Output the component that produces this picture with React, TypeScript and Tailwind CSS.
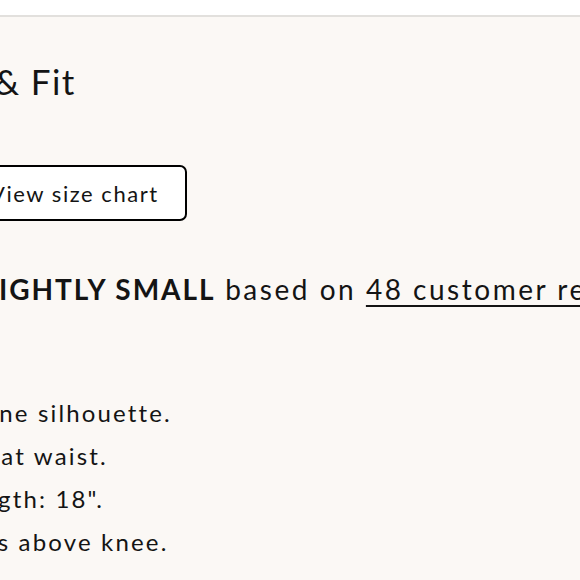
export default function App() {
  const points = [
    "A-line silhouette.",
    "Tie at waist.",
    "Length: 18\".",
    "Falls above knee.",
  ];

  return (
    <div className="w-[580px] h-[580px] overflow-hidden bg-[#fbf8f5] text-[#141414] font-['Lato',sans-serif]">
      <div className="h-[17px] bg-white border-b-2 border-[#e2e0dd]" />
      <div className="flex flex-col items-start">
        <h2 className="mt-[40px] -ml-[83px] text-[35px] leading-[48px] tracking-[0.04em] whitespace-nowrap">
          Size &amp; Fit
        </h2>
        <button
          type="button"
          className="mt-[60px] -ml-[38px] h-[56px] px-[26px] bg-white border-2 border-black rounded-[7px] text-[22px] tracking-[0.07em] whitespace-nowrap"
        >
          View size chart
        </button>
        <p className="mt-[48px] -ml-[115px] text-[28px] leading-[40px] tracking-[0.09em] whitespace-nowrap">
          Runs <strong className="font-bold tracking-[0.07em]">SLIGHTLY SMALL</strong> based on{" "}
          <span className="underline underline-offset-[5px] decoration-[2px]">48 customer reviews</span>
        </p>
        <ul className="mt-[82px] -ml-[74px] list-disc pl-[28px] text-[24px] leading-[43px] tracking-[0.09em] whitespace-nowrap">
          {points.map((p) => (
            <li key={p}>{p}</li>
          ))}
        </ul>
      </div>
    </div>
  );
}
